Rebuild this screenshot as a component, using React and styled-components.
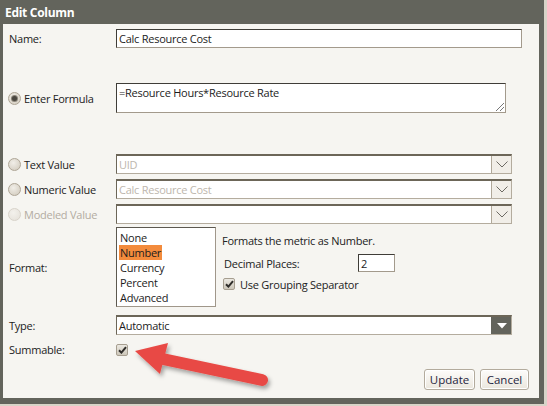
import React from 'react';
import styled, { createGlobalStyle } from 'styled-components';

const GlobalStyle = createGlobalStyle`
  html, body {
    margin: 0;
    padding: 0;
    background: #d8d4c8;
    font-family: "Open Sans", "Noto Sans", sans-serif;
  }
`;

const Page = styled.div`
  position: relative;
  width: 547px;
  height: 406px;
  overflow: hidden;
`;

const Dialog = styled.div`
  width: 544px;
  height: 404px;
  box-sizing: border-box;
  display: flex;
  flex-direction: column;
  background: #63645c;
  border-left: 3px solid #63645c;
  border-right: 5px solid #63645c;
  border-bottom: 6px solid #63645c;
`;

const TitleBar = styled.div`
  height: 24px;
  display: flex;
  align-items: center;
  padding-left: 2px;
  color: #fff;
  font-size: 12px;
  font-weight: 700;
  letter-spacing: -0.3px;
`;

const Body = styled.div`
  flex: 1;
  background: #f6f5f1;
  padding: 0 10px 0 6px;
  display: flex;
  flex-direction: column;
  color: #222;
  font-size: 11px;
  letter-spacing: -0.25px;
`;

const Row = styled.div`
  display: grid;
  grid-template-columns: 107px 1fr;
  align-items: center;
  margin-top: ${p => p.gap}px;
`;

const Label = styled.label`
  display: flex;
  align-items: center;
  gap: 3px;
  color: ${p => (p.disabled ? '#b3aca2' : '#222')};
`;

const Radio = styled.span`
  width: 13px;
  height: 13px;
  margin-left: -1px;
  box-sizing: border-box;
  border-radius: 50%;
  border: 1px solid ${p => (p.disabled ? '#d8d3ca' : '#aea596')};
  background: ${p =>
    p.disabled
      ? 'radial-gradient(circle at 40% 35%, #f3f1ec, #e4e0d8)'
      : 'radial-gradient(circle at 40% 35%, #f1eee8, #cfc8ba)'};
  display: flex;
  align-items: center;
  justify-content: center;
  &::after {
    content: '';
    display: ${p => (p.checked ? 'block' : 'none')};
    width: 5px;
    height: 5px;
    border-radius: 50%;
    background: #4a4740;
    box-shadow: 0 0 0 1px #8a8478;
  }
`;

const TextInput = styled.div`
  width: ${p => p.w}px;
  height: ${p => p.h || 19}px;
  box-sizing: border-box;
  background: #fff;
  border-style: solid;
  border-width: 1px;
  border-color: #3f3d38 #a39a8c #a39a8c #3f3d38;
  padding: 1px 2px;
  display: flex;
  align-items: ${p => (p.top ? 'flex-start' : 'center')};
  color: #1c1c1c;
  line-height: 15px;
`;

const Area = styled(TextInput)`
  position: relative;
  &::after {
    content: '';
    position: absolute;
    right: 1px;
    bottom: 1px;
    width: 8px;
    height: 8px;
    background: linear-gradient(135deg, transparent 45%, #777 45%, #777 52%, transparent 52%, transparent 70%, #777 70%, #777 77%, transparent 77%);
  }
`;

const Select = styled.div`
  width: 396px;
  height: 20px;
  box-sizing: border-box;
  display: flex;
  background: #fff;
  border-style: solid;
  border-width: 1px;
  border-color: #6c6658 #b4ac9e #b4ac9e #6c6658;
  border-top-width: 2px;
`;

const SelectText = styled.div`
  flex: 1;
  display: flex;
  align-items: center;
  padding-left: 2px;
  color: ${p => (p.muted ? '#bdb6ad' : '#1c1c1c')};
`;

const SelectButton = styled.div`
  width: 19px;
  display: flex;
  align-items: center;
  justify-content: center;
  background: ${p => (p.dark ? '#63645c' : '#f1eee8')};
  border-left: 1px solid ${p => (p.dark ? '#63645c' : '#b0a899')};
`;

const Chevron = () => (
  <svg width="12" height="7" viewBox="0 0 12 7">
    <polyline points="0.5,0.5 6,6 11.5,0.5" fill="none" stroke="#6d6a63" strokeWidth="1" />
  </svg>
);

const Triangle = () => (
  <svg width="10" height="6" viewBox="0 0 10 6">
    <polygon points="0,0 10,0 5,5.5" fill="#fff" />
  </svg>
);

const FormatWrap = styled.div`
  display: flex;
  align-items: flex-start;
`;

const ListBox = styled.div`
  width: 100px;
  height: 80px;
  box-sizing: border-box;
  background: #fff;
  border-style: solid;
  border-width: 1px;
  border-color: #5c584f #a0978a #a0978a #5c584f;
  padding: 2px 0 0 2px;
  display: flex;
  flex-direction: column;
`;

const ListItem = styled.div`
  height: 15px;
  line-height: 15px;
  align-self: flex-start;
  padding: 0 1px;
  color: #1c1c1c;
  background: ${p => (p.selected ? '#f38b3c' : 'transparent')};
`;

const FormatPanel = styled.div`
  margin-left: 6px;
  padding-top: 5px;
  display: flex;
  flex-direction: column;
`;

const PanelLine = styled.div`
  display: flex;
  align-items: center;
  height: ${p => p.h}px;
  margin-top: ${p => p.gap || 0}px;
  margin-left: ${p => p.indent || 0}px;
`;

const DecimalLabel = styled.span`
  width: 134px;
`;

const Check = styled.span`
  width: 12px;
  height: 12px;
  box-sizing: border-box;
  border-radius: 2px;
  border: 1px solid #a69e90;
  background: linear-gradient(#ebe8e1, #cdc7ba);
  display: inline-flex;
  align-items: center;
  justify-content: center;
  margin-right: ${p => p.mr || 0}px;
`;

const CheckMark = () => (
  <svg width="9" height="8" viewBox="0 0 9 8">
    <path d="M1 4.2 L3.4 6.6 L8 1.2" fill="none" stroke="#2f2d2a" strokeWidth="2" />
  </svg>
);

const Footer = styled.div`
  display: flex;
  justify-content: flex-end;
  gap: 5px;
  margin-top: 12px;
`;

const Button = styled.button`
  height: 21px;
  width: ${p => p.w}px;
  box-sizing: border-box;
  font: inherit;
  font-size: 11.5px;
  color: #1f2540;
  border: 1px solid #b3ab9d;
  border-radius: 3px;
  box-shadow: inset 0 0 0 1px #fff;
  background: linear-gradient(#fdfcfa, #ebe7de);
  padding: 0;
`;

const Overlay = styled.svg`
  position: absolute;
  left: 0;
  top: 0;
  pointer-events: none;
`;

export default function App() {
  return (
    <Page>
      <GlobalStyle />
      <Dialog>
        <TitleBar>Edit Column</TitleBar>
        <Body>
          <Row gap={5}>
            <Label>Name:</Label>
            <TextInput w={406}>Calc Resource Cost</TextInput>
          </Row>
          <Row gap={35}>
            <Label><Radio checked />Enter Formula</Label>
            <Area w={390} h={30} top>=Resource Hours*Resource Rate</Area>
          </Row>
          <Row gap={41}>
            <Label><Radio />Text Value</Label>
            <Select>
              <SelectText muted>UID</SelectText>
              <SelectButton><Chevron /></SelectButton>
            </Select>
          </Row>
          <Row gap={5}>
            <Label><Radio />Numeric Value</Label>
            <Select>
              <SelectText muted>Calc Resource Cost</SelectText>
              <SelectButton><Chevron /></SelectButton>
            </Select>
          </Row>
          <Row gap={5}>
            <Label disabled><Radio disabled />Modeled Value</Label>
            <Select>
              <SelectText />
              <SelectButton><Chevron /></SelectButton>
            </Select>
          </Row>
          <Row gap={3}>
            <Label>Format:</Label>
            <FormatWrap>
              <ListBox>
                <ListItem>None</ListItem>
                <ListItem selected>Number</ListItem>
                <ListItem>Currency</ListItem>
                <ListItem>Percent</ListItem>
                <ListItem>Advanced</ListItem>
              </ListBox>
              <FormatPanel>
                <PanelLine h={16}>Formats the metric as Number.</PanelLine>
                <PanelLine h={18} gap={6} indent={2}>
                  <DecimalLabel>Decimal Places:</DecimalLabel>
                  <TextInput w={37} h={18}>2</TextInput>
                </PanelLine>
                <PanelLine h={16} gap={4} indent={1}>
                  <Check mr={5}><CheckMark /></Check>
                  Use Grouping Separator
                </PanelLine>
              </FormatPanel>
            </FormatWrap>
          </Row>
          <Row gap={8}>
            <Label>Type:</Label>
            <Select>
              <SelectText>Automatic</SelectText>
              <SelectButton dark><Triangle /></SelectButton>
            </Select>
          </Row>
          <Row gap={7}>
            <Label>Summable:</Label>
            <Check><CheckMark /></Check>
          </Row>
          <Footer>
            <Button w={51}>Update</Button>
            <Button w={49}>Cancel</Button>
          </Footer>
        </Body>
      </Dialog>
      <Overlay width="547" height="406" viewBox="0 0 547 406">
        <defs>
          <filter id="shadow" x="-20%" y="-40%" width="140%" height="180%">
            <feDropShadow dx="2" dy="3" stdDeviation="2" floodColor="#000" floodOpacity="0.35" />
          </filter>
        </defs>
        <g filter="url(#shadow)" fill="#e84a45">
          <line x1="158" y1="358" x2="262" y2="380" stroke="#e84a45" strokeWidth="12" strokeLinecap="round" />
          <polygon points="135,351 168,343 160,374" />
        </g>
      </Overlay>
    </Page>
  );
}
